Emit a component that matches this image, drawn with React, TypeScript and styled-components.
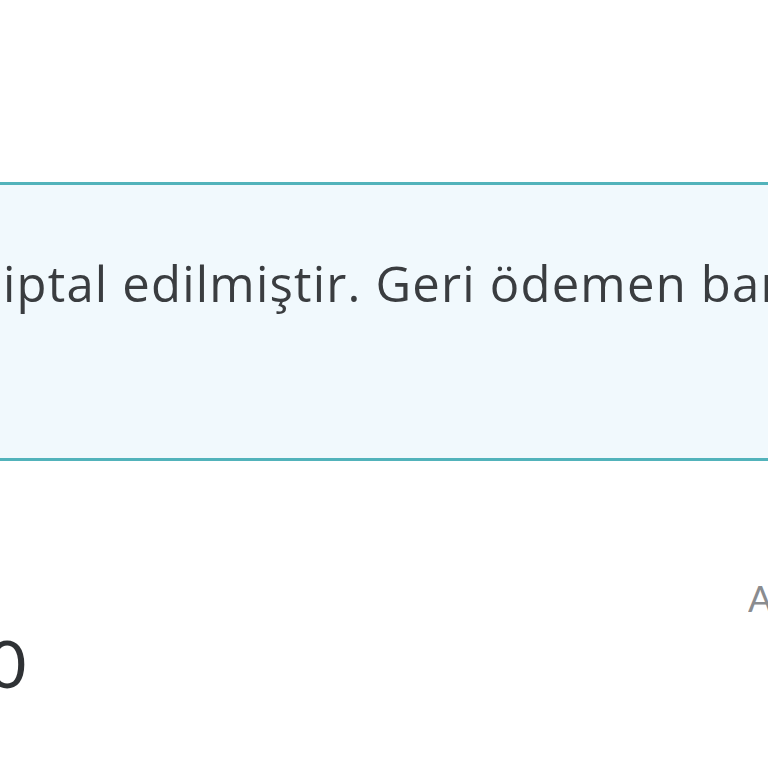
import styled, { createGlobalStyle } from 'styled-components';

const GlobalStyle = createGlobalStyle`
  html, body {
    margin: 0;
    padding: 0;
    background: #ffffff;
    overflow: hidden;
  }
  body {
    width: 768px;
    height: 768px;
    font-family: 'Open Sans', 'Liberation Sans', sans-serif;
  }
`;

const Page = styled.div`
  width: 768px;
  height: 768px;
  overflow: hidden;
  padding-top: 182px;
  box-sizing: border-box;
`;

const Notice = styled.div`
  margin-left: -20px;
  width: 900px;
  height: 279px;
  box-sizing: border-box;
  border: 3px solid #52b3bb;
  background: #f1f9fd;
  padding: 70px 0 0 20px;
`;

const NoticeText = styled.p`
  margin: 0;
  font-size: 49px;
  line-height: 56px;
  color: #3a3d40;
  white-space: nowrap;
  letter-spacing: 1.2px;
`;

const InfoRow = styled.div`
  display: flex;
  justify-content: space-between;
  align-items: flex-start;
  margin-top: 117px;
  white-space: nowrap;
`;

const Amount = styled.span`
  margin-left: -12px;
  margin-top: 50px;
  font-family: 'Lato', sans-serif;
  font-size: 66px;
  line-height: 70px;
  color: #2f3235;
`;

const Label = styled.span`
  width: 20px;
  overflow: hidden;
  font-family: 'Lato', sans-serif;
  font-size: 36px;
  line-height: 40px;
  color: #8a8c8f;
`;

export default function App() {
  return (
    <>
      <GlobalStyle />
      <Page>
        <Notice>
          <NoticeText>iptal edilmiştir. Geri ödemen bankana iade edilecektir.</NoticeText>
        </Notice>
        <InfoRow>
          <Amount>0</Amount>
          <Label>Alıcı</Label>
        </InfoRow>
      </Page>
    </>
  );
}
